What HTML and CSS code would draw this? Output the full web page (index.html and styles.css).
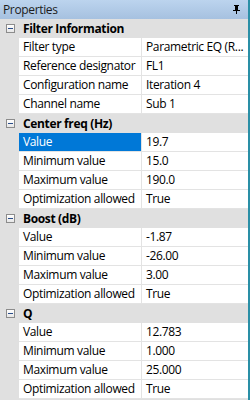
FILE: index.html
```html
<!DOCTYPE html>
<html>
<head>
<meta charset="utf-8">
<link rel="stylesheet" href="styles.css">
</head>
<body>
<div class="panel">
  <div class="titlebar">
    <span class="title">Properties</span>
    <svg class="pin" width="9" height="9" viewBox="0 0 9 9"><path d="M2 0h5v1H6v4h2v1H5v3H4V6H1V5h2V1H2z" fill="#000"/><rect x="5" y="1" width="1" height="4" fill="#000"/></svg>
  </div>
  <div class="grid">
    <div class="section"><span class="toggle"></span><span class="stitle">Filter Information</span></div>
    <div class="row"><span class="name">Filter type</span><span class="val">Parametric EQ (R...</span></div>
    <div class="row"><span class="name">Reference designator</span><span class="val">FL1</span></div>
    <div class="row"><span class="name">Configuration name</span><span class="val">Iteration 4</span></div>
    <div class="row"><span class="name">Channel name</span><span class="val">Sub 1</span></div>

    <div class="section"><span class="toggle"></span><span class="stitle">Center freq (Hz)</span></div>
    <div class="row"><span class="name selected">Value</span><span class="val">19.7</span></div>
    <div class="row"><span class="name">Minimum value</span><span class="val">15.0</span></div>
    <div class="row"><span class="name">Maximum value</span><span class="val">190.0</span></div>
    <div class="row"><span class="name">Optimization allowed</span><span class="val">True</span></div>

    <div class="section"><span class="toggle"></span><span class="stitle">Boost (dB)</span></div>
    <div class="row"><span class="name">Value</span><span class="val">-1.87</span></div>
    <div class="row"><span class="name">Minimum value</span><span class="val">-26.00</span></div>
    <div class="row"><span class="name">Maximum value</span><span class="val">3.00</span></div>
    <div class="row"><span class="name">Optimization allowed</span><span class="val">True</span></div>

    <div class="section"><span class="toggle"></span><span class="stitle">Q</span></div>
    <div class="row"><span class="name">Value</span><span class="val">12.783</span></div>
    <div class="row"><span class="name">Minimum value</span><span class="val">1.000</span></div>
    <div class="row"><span class="name">Maximum value</span><span class="val">25.000</span></div>
    <div class="row"><span class="name">Optimization allowed</span><span class="val">True</span></div>
  </div>
</div>
</body>
</html>
```
FILE: styles.css
```css
html, body {
  margin: 0;
  padding: 0;
  background: #ffffff;
}
.panel {
  width: 248px;
  height: 400px;
  border-right: 2px solid #2a8fa6;
  background: #e0e0e0;
  font-family: "Open Sans", "Noto Sans", sans-serif;
  font-size: 12px;
  letter-spacing: -0.35px;
  color: #000;
  overflow: hidden;
}
.titlebar {
  height: 19px;
  background: linear-gradient(#bcd4ee, #a6c1e0);
  display: flex;
  align-items: center;
  justify-content: space-between;
  padding: 0 7px 0 3px;
}
.title {
  color: #1b1b1b;
  line-height: 19px;
}
.pin {
  display: block;
}
.grid {
  display: flex;
  flex-direction: column;
}
.section {
  height: 19px;
  display: flex;
  align-items: center;
  background: #e0e0e0;
}
.toggle {
  width: 7px;
  height: 7px;
  margin-left: 6px;
  border: 1px solid #8c8c8c;
  background: linear-gradient(#ffffff, #e6e6e6);
  position: relative;
  box-sizing: content-box;
}
.toggle::after {
  content: "";
  position: absolute;
  left: 1px;
  top: 3px;
  width: 5px;
  height: 1px;
  background: #2a4d8a;
}
.stitle {
  font-weight: bold;
  margin-left: 8px;
  line-height: 19px;
}
.row {
  height: 19px;
  display: flex;
  padding-left: 19px;
}
.name, .val {
  background: #fff;
  height: 18px;
  line-height: 18px;
  border-bottom: 1px solid #e3e3e3;
  white-space: nowrap;
  overflow: hidden;
}
.name {
  width: 118px;
  padding-left: 4px;
  border-right: 1px solid #e3e3e3;
}
.val {
  flex: 1;
  padding-left: 4px;
}
.name.selected {
  background: #0078d7;
  color: #fff;
}
```
